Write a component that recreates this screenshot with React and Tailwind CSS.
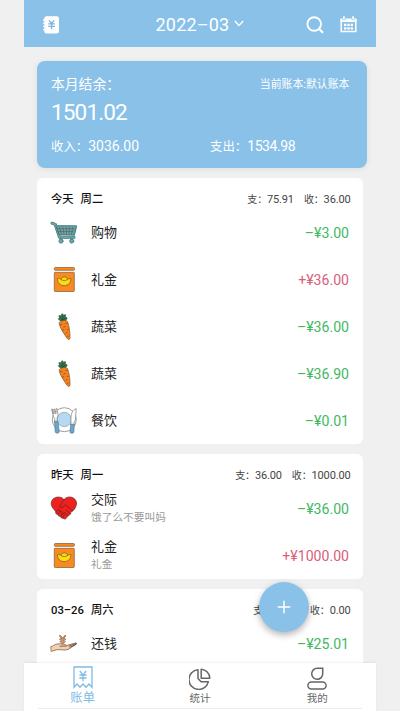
const days = [
  {
    date: "今天",
    week: "周二",
    out: "75.91",
    income: "36.00",
    items: [
      { icon: CartIcon, name: "购物", amount: "3.00" },
      { icon: GiftIcon, name: "礼金", amount: "36.00", plus: true },
      { icon: CarrotIcon, name: "蔬菜", amount: "36.00" },
      { icon: CarrotIcon, name: "蔬菜", amount: "36.90" },
      { icon: DishIcon, name: "餐饮", amount: "0.01" },
    ],
  },
  {
    date: "昨天",
    week: "周一",
    out: "36.00",
    income: "1000.00",
    items: [
      { icon: HeartIcon, name: "交际", note: "饿了么不要叫妈", amount: "36.00" },
      { icon: GiftIcon, name: "礼金", note: "礼金", amount: "1000.00", plus: true },
    ],
  },
  {
    date: "03–26",
    week: "周六",
    out: "25.01",
    income: "0.00",
    items: [{ icon: HandIcon, name: "还钱", amount: "25.01" }],
  },
];

/* Category icons */
function CartIcon() {
  return (
    <svg width="28" height="28" viewBox="0 0 28 28" fill="none" strokeLinecap="round" strokeLinejoin="round">
      <path d="M2 4.2L5.2 5.3L9.5 18.3H24" stroke="#3f6668" strokeWidth="3" />
      <path d="M2 4.2L5.2 5.3L9.5 18.3H24" stroke="#69a9aa" strokeWidth="2" />
      <path d="M6 6.6L26.5 7.2L24.3 16L9.2 15.6Z" fill="#78a9aa" stroke="#467476" strokeWidth="1.2" />
      <path d="M9.5 7.5L11.5 15.2M12.8 7.5L14 15.2M16 7.5L16.5 15.2M19.3 7.5L19 15.2M22.6 7.5L21.6 15.2M7.5 9.8H25M8.3 12.6H24" stroke="#4d6a6c" strokeWidth="0.8" />
      <path d="M6 6.8L26.3 7.3M24.8 8L23.4 16" stroke="#5b999b" strokeWidth="1.8" />
      <path d="M11 18.5V21M21.5 18.5V21" stroke="#5b999b" strokeWidth="2.4" />
      <circle cx="11" cy="22.1" r="2.1" fill="#69a9aa" stroke="#476c6e" strokeWidth="0.7" />
      <circle cx="21.7" cy="22.1" r="2.1" fill="#69a9aa" stroke="#476c6e" strokeWidth="0.7" />
    </svg>
  );
}

function GiftIcon() {
  return (
    <svg width="28" height="28" viewBox="0 0 28 28" stroke="#7a5a35" strokeWidth="0.7">
      <rect x="4.3" y="1.5" width="20.2" height="2.8" rx="1" fill="#f98a22" />
      <rect x="4.3" y="6.3" width="20" height="19.2" rx="0.8" fill="#f98a22" />
      <path d="M7.5 12.6C9 12 10.3 13 11.2 13.5C11.5 10 17.3 10 17.4 13.5C18.5 12.8 19.6 12.2 20.9 12.6C20.8 16.9 18.5 19.6 14.2 19.6C10 19.6 7.4 16.8 7.5 12.6Z" fill="#fbdc0f" />
      <path d="M10.8 13.4C12.5 14.9 16 14.9 17.7 13.4" fill="none" />
    </svg>
  );
}

function CarrotIcon() {
  return (
    <svg width="28" height="28" viewBox="0 0 28 28" strokeLinejoin="round">
      <path d="M10.5 8L8.3 5.8L10 5L8.8 2.8L11 2.9L12.2 0.7L13.5 2.2L15.5 1.8L15 4L17.2 5L15.6 7.5L13 8.8Z" fill="#2c7d4b" stroke="#234732" strokeWidth="0.8" />
      <path d="M12.7 3V7.5M10.5 5.2L12.5 7M15 4.8L13.3 7" stroke="#173d27" strokeWidth="0.6" />
      <path d="M9.2 9.8C9.6 7.8 16 6.6 17.3 8.3C19 11.3 20.5 21.5 19.9 25.4C19.6 27 18 26.6 17.2 25.4C14.8 22 9.1 14 9.2 9.8Z" fill="#f58220" stroke="#80542c" strokeWidth="0.7" />
      <path d="M9.8 12L12.3 11.2M15.4 10.6L17.7 10.2M13.3 14.2L15.6 13.4M12.2 17.2L14.2 16.4M16.8 16.7L18.8 16.2M15.7 20.2L17.5 19.6M17 23.4L18.6 23" stroke="#87451d" strokeWidth="0.7" />
    </svg>
  );
}

function DishIcon() {
  return (
    <svg width="28" height="28" viewBox="0 0 28 28" strokeLinejoin="round">
      <circle cx="14.3" cy="12.7" r="12" fill="#fff" stroke="#777" strokeWidth="0.7" />
      <circle cx="14.3" cy="12.5" r="7.2" fill="#b4d9f0" stroke="#87919a" strokeWidth="0.6" />
      <path d="M1.6 2.2L3 7.8C3.4 9.8 4 10.6 4.8 11.3L4.6 14.5H7.3L7 11C8.2 9.5 8 7.8 7.8 6L7 1.6L5.9 1.8L6.2 6.5L5.3 6.6L4.6 2L3.7 2.1L4 6.8L3.2 6.8L2.4 2Z" fill="#fff" stroke="#666" strokeWidth="0.6" />
      <path d="M4.5 14.2H8L9.3 24.8C9.2 26.6 5.4 26.8 5.2 24.8Z" fill="#6ba5ca" stroke="#50718a" strokeWidth="0.6" />
      <path d="M26.2 1.7C22.8 2.6 21.2 6 21 10.5L20.9 18H23.9L24.2 14.5L25.4 13.5Z" fill="#fff" stroke="#666" strokeWidth="0.6" />
      <path d="M20.7 17.2H24.3L23.9 25.2C23.6 26.7 20.2 26.7 20 25.2Z" fill="#6ba5ca" stroke="#50718a" strokeWidth="0.6" />
    </svg>
  );
}

function HeartIcon() {
  return (
    <svg width="28" height="28" viewBox="0 0 28 28" strokeLinejoin="round" strokeLinecap="round">
      <path d="M14 4.6C16 1.7 20.5 1.2 23.7 3.2C27.2 5.6 27.3 10 24.8 13.2L20.8 17.5C21 19 20 19.8 19 19.5C19 21 17.8 21.6 17 21.3C17 23 15.8 24.3 14.4 23.9L12.7 23C11.5 23.5 10.5 22.4 10.8 21.2C9 21.8 7.8 20.6 8.2 19.2C6.4 19.7 5.2 18.2 5.9 16.8L3 13.2C0.4 10 0.6 5.7 4 3.3C7.5 1.2 12 1.8 14 4.6Z" fill="#ee2020" stroke="#793530" strokeWidth="0.8" />
      <path d="M14.3 4.7L9.7 10.7C9.5 13 11.7 13.3 13.2 11.7L15.5 9.8L22.7 16M22.7 16L25.2 13M5.9 16.8L8 14.6C9.2 14 10.2 15 9.7 16.2L8.2 19.2M9.7 17C11 15.7 12.8 16.6 12.2 18L10.8 21.2M12.2 18.8C13.8 17.8 14.8 19 14.2 20.2L12.7 23M16.2 15.2L20 18.6M14.6 17.2L18 20.6" fill="none" stroke="#70231f" strokeWidth="0.8" />
    </svg>
  );
}

function HandIcon() {
  return (
    <svg width="28" height="28" viewBox="0 0 28 28" strokeLinejoin="round" strokeLinecap="round">
      <path d="M1.2 16.6C3.5 16.4 4.2 14.2 7.2 14C10.2 13.7 13.5 13.5 15.5 14.6L16.3 15.6L25.5 13C26.8 12.8 26.9 14 25.9 14.6L18 19.4C15 21 9.5 19 6.3 19.8L1.5 21.3Z" fill="#f7cfaa" stroke="#69503f" strokeWidth="0.7" />
      <path d="M10 16.2L16.2 16.1M19 16.1L26 13.4M20 17.2L25.8 14.3" stroke="#59483d" strokeWidth="0.8" />
      <path d="M9.9 5.8L12.6 9L15.3 5.8M12.6 9V14M10.2 9.4H15M10.4 11.6H14.8" fill="none" stroke="#765544" strokeWidth="1.6" />
      <path d="M9.9 5.8L12.6 9L15.3 5.8M12.6 9V14M10.2 9.4H15M10.4 11.6H14.8" fill="none" stroke="#dc9c6b" strokeWidth="0.9" />
    </svg>
  );
}

function ItemRow({ item }) {
  const Icon = item.icon;
  return (
    <div className="flex h-[47px] items-center pr-3.5 pl-[13px]">
      <Icon />
      <div className="ml-[13px] flex flex-1 flex-col">
        <span className="text-[13px] leading-[18px] text-[#222]">{item.name}</span>
        {item.note && (
          <span className="text-[10.7px] leading-[17px] text-[#999]">{item.note}</span>
        )}
      </div>
      <span
        className={`pt-0.5 text-[14.1px] ${
          item.plus ? "text-[#d8607c]" : "text-[#3fb864]"
        }`}
      >
        {item.plus ? "+" : "–"}¥{item.amount}
      </span>
    </div>
  );
}

function DayCard({ day }) {
  return (
    <section className="mx-[13px] shrink-0 rounded-md bg-white">
      <div className="flex h-[31.5px] items-end justify-between pr-[12.5px] pl-[14px]">
        <h2 className="text-[11.3px] leading-[18px] font-medium text-[#111]">
          {day.date}
          <span className="ml-[7px]">{day.week}</span>
        </h2>
        <p className="text-[11px] leading-[18px] tracking-[-0.15px] text-[#444]">
          <span className="text-[10px]">支：</span>
          {day.out}
          <span className="ml-2.5 text-[10px]">收：</span>
          {day.income}
        </p>
      </div>
      {day.items.map((item, i) => (
        <ItemRow key={i} item={item} />
      ))}
    </section>
  );
}

export default function App() {
  return (
    <div className="h-[711px] w-[400px] overflow-hidden bg-[#f0f0f0] px-6 font-[Roboto,'Noto_Sans_CJK_SC',sans-serif]">
      <div className="relative flex h-full w-[352px] flex-col">
        {/* Top bar */}
        <header className="flex h-[47px] shrink-0 items-center bg-[#8ac1e9] pr-[19px] pl-[18px] text-white">
          <svg width="18" height="20" viewBox="0 0 18 20" className="mt-0.5" fill="none">
            <path d="M4.5 1.2H14.8Q17 1.2 17 3.4V16.2Q17 18.4 14.8 18.4H4.5Q2.3 18.4 2.3 16.2V3.4Q2.3 1.2 4.5 1.2Z" fill="#fff" />
            <path d="M1 5H3.3M1 8.2H3.3M1 11.4H3.3M1 14.6H3.3" stroke="#fff" strokeWidth="1.3" />
            <path d="M7 5.3L9.6 8.5L12.2 5.3M9.6 8.5V14.2M6.3 8.8H12.9M6.3 11.3H12.9" stroke="#7bb5df" strokeWidth="1.3" />
          </svg>
          <div className="ml-[95.5px] flex items-center text-[18px] leading-none">
            <span className="pt-[3px] tracking-[0.2px]">2022–03</span>
            <svg width="10" height="7" viewBox="0 0 10 7" className="ml-[5px]" fill="none">
              <path d="M0.8 1L5 5.4L9.2 1" stroke="#fff" strokeWidth="1.4" />
            </svg>
          </div>
          <div className="ml-auto flex items-center gap-4 pt-0.5">
            <svg width="18" height="18" viewBox="0 0 18 18" fill="none" stroke="#fff" strokeLinecap="round">
              <circle cx="8.2" cy="8" r="6.8" strokeWidth="1.9" />
              <path d="M13.2 13L16.4 16.2" strokeWidth="2.2" />
            </svg>
            <svg width="17" height="17" viewBox="0 0 17 17" fill="none" stroke="#fff">
              <path d="M1.2 3V15.6H15.8V3" strokeWidth="1.5" />
              <path d="M0.5 2.5H2.6V4.2H5.3V2.5H11.7V4.2H14.4V2.5H16.5V6H0.5Z" fill="#fff" stroke="none" />
              <path d="M3.9 0.3V3.4M13.1 0.3V3.4" strokeWidth="1.7" />
              <path d="M4 8.9H13M4 12.3H13" strokeWidth="2.3" strokeDasharray="2.4 0.9" />
            </svg>
          </div>
        </header>

        <main className="flex min-h-0 flex-1 flex-col gap-[9.5px] overflow-hidden pt-[13.5px]">
          {/* Month summary */}
          <section className="mr-[9px] ml-[13px] h-[107.5px] shrink-0 rounded-lg bg-[#8ac1e9] px-[14px] pt-[13px] text-white shadow-[0_1px_6px_rgba(0,0,0,0.08)]">
            <div className="flex items-center justify-between pr-[3.5px]">
              <span className="text-[13.8px] leading-5">本月结余：</span>
              <span className="pt-px text-[10.9px] leading-5">当前账本:默认账本</span>
            </div>
            <div className="mt-[3px] text-[22.6px] leading-[30px] tracking-[-0.9px]">1501.02</div>
            <div className="mt-2 flex text-[14px] leading-5">
              <div className="w-[159px]">
                <span className="text-[12.4px]">收入：</span>3036.00
              </div>
              <div className="tracking-[-0.4px]">
                <span className="text-[12.4px] tracking-normal">支出：</span>1534.98
              </div>
            </div>
          </section>

          {days.map((day) => (
            <DayCard key={day.date} day={day} />
          ))}
        </main>

        {/* Add button */}
        <button className="absolute top-[582px] left-[235px] flex size-[50px] items-center justify-center rounded-full bg-[#8ac1e9] shadow-[0_3px_7px_rgba(0,0,0,0.3)]">
          <svg width="14" height="14" viewBox="0 0 14 14" stroke="#fff" strokeWidth="1.5">
            <path d="M7 0.7V13.3M0.7 7H13.3" />
          </svg>
        </button>

        {/* Tab bar */}
        <nav className="relative h-12 shrink-0 bg-white shadow-[0_-1px_2px_rgba(0,0,0,0.06)]">
          <div className="grid h-[45px] grid-cols-3 text-[10.5px] text-[#666]">
            <div className="flex flex-col items-center pt-[2.5px] text-[#7fbbe6]">
              <svg width="20" height="23" viewBox="0 0 20 23" fill="none" stroke="currentColor" strokeWidth="1.3">
                <path d="M1 1H19V21.3L16 18L13 21.3L10 18L7 21.3L4 18L1 21.3Z" />
                <path d="M6.8 5L10 8.8L13.2 5M10 8.8V15.2M6.4 9H13.6M6.4 12H13.6" />
              </svg>
              <span className="text-[12.3px] leading-[18px]">账单</span>
            </div>
            <div className="flex flex-col items-center pt-[5px]">
              <svg width="22" height="22" viewBox="0 0 22 22" fill="none" stroke="currentColor" strokeWidth="1.5" strokeLinejoin="round">
                <path d="M9 1.8A9.8 9.8 0 1 0 19.3 13.8H12L9 10.5Z" />
                <path d="M12.2 1.2A9.3 9.3 0 0 1 20.8 10.2H12.2Z" />
              </svg>
              <span className="leading-[18px]">统计</span>
            </div>
            <div className="flex flex-col items-center pt-1">
              <svg width="20" height="23" viewBox="0 0 20 23" fill="none" stroke="currentColor" strokeWidth="1.5">
                <path d="M10.3 1.3H15.7V6.7A5.5 5.5 0 1 1 10.3 1.3Z" />
                <rect x="0.9" y="15" width="18.2" height="7" rx="3.5" />
              </svg>
              <span className="leading-[18px]">我的</span>
            </div>
          </div>
          <div className="mx-3.5 h-px bg-[#ececec]" />
        </nav>
      </div>
    </div>
  );
}
